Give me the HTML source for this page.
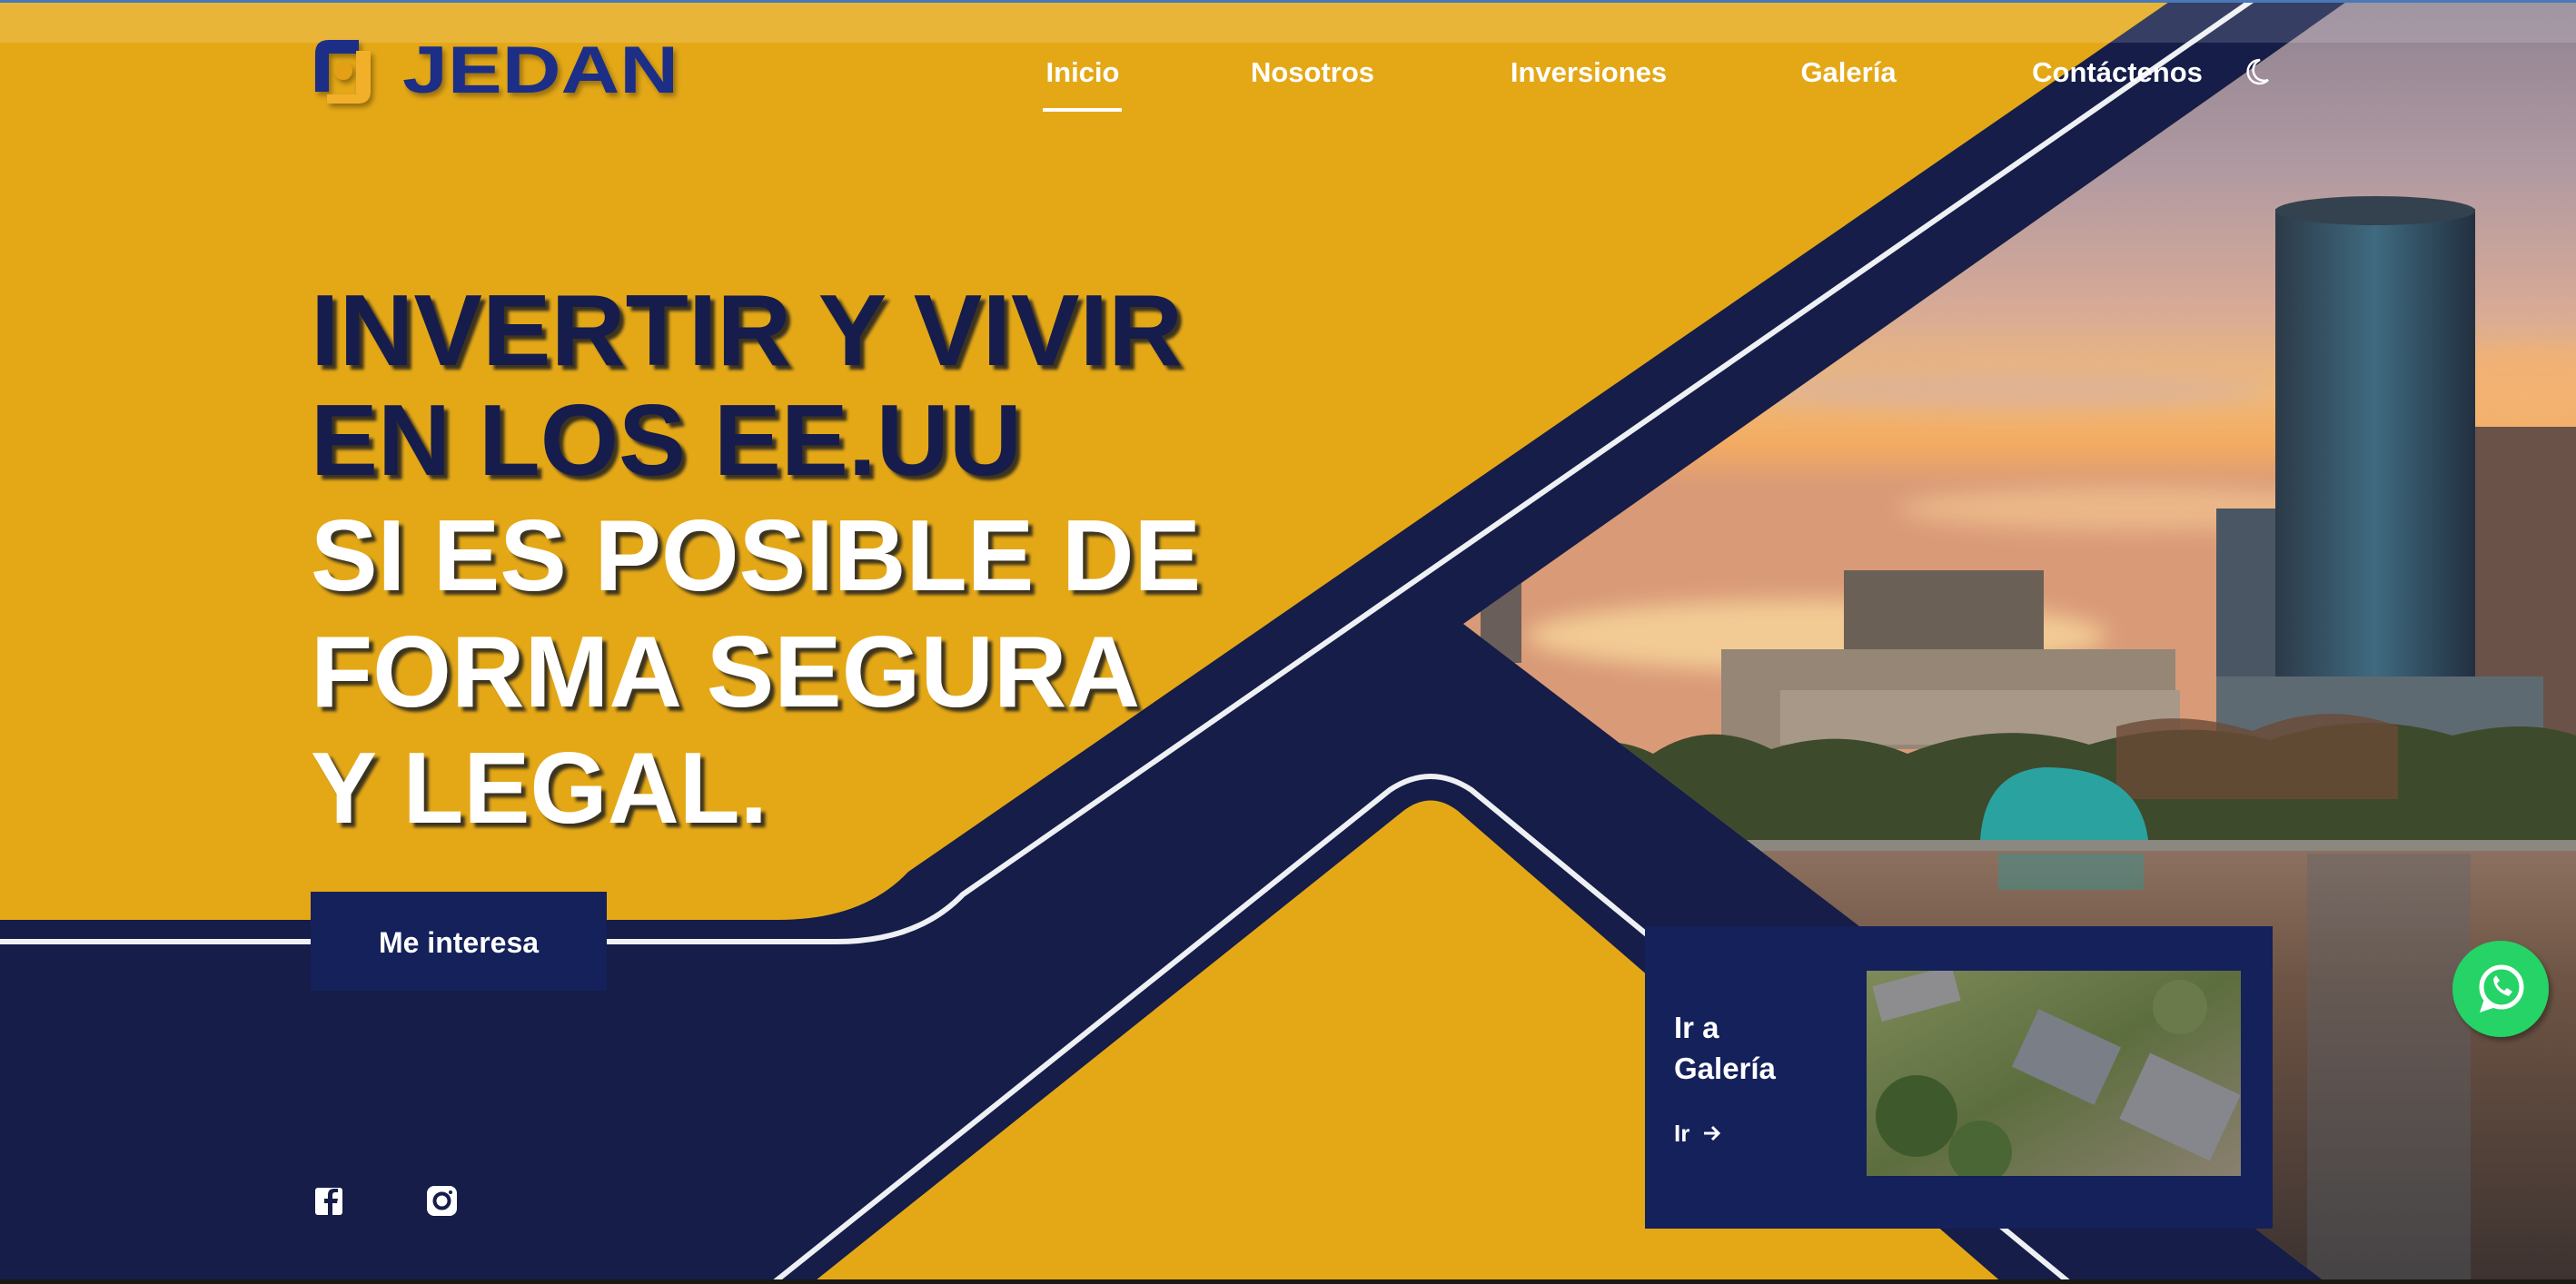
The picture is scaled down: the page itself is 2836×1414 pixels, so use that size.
<!DOCTYPE html>
<html><head><meta charset="utf-8"><style>
html,body{margin:0;padding:0;width:2836px;height:1414px;overflow:hidden;background:#e4a817}
svg{display:block}
</style></head><body>
<svg width="2836" height="1414" viewBox="0 0 2836 1414" xmlns="http://www.w3.org/2000/svg">
<defs>
<linearGradient id="sky" x1="0" y1="0" x2="0" y2="1">
<stop offset="0" stop-color="#8f8291"/>
<stop offset="0.2" stop-color="#b19aa2"/>
<stop offset="0.36" stop-color="#d7aa96"/>
<stop offset="0.46" stop-color="#f0b978"/>
<stop offset="0.52" stop-color="#f3ab62"/>
<stop offset="0.57" stop-color="#d99a78"/>
</linearGradient>
<linearGradient id="water" x1="0" y1="0" x2="0" y2="1">
<stop offset="0" stop-color="#8c7060"/>
<stop offset="0.3" stop-color="#6e5444"/>
<stop offset="1" stop-color="#3c3230"/>
</linearGradient>
<linearGradient id="tower" x1="0" y1="0" x2="1" y2="0">
<stop offset="0" stop-color="#2c3a48"/><stop offset="0.5" stop-color="#3f6a80"/><stop offset="1" stop-color="#223040"/>
</linearGradient>
<linearGradient id="house" x1="0" y1="0" x2="1" y2="1">
<stop offset="0" stop-color="#7e8a5a"/><stop offset="0.5" stop-color="#5d6e3e"/><stop offset="1" stop-color="#8a8070"/>
</linearGradient>
<clipPath id="photo"><polygon points="2586,0 2836,0 2836,1414 2563,1414 1611,687"/></clipPath>
<filter id="sh" x="-5%" y="-5%" width="110%" height="120%"><feDropShadow dx="5" dy="5" stdDeviation="1.5" flood-color="#1a1a1a" flood-opacity="0.85"/></filter>
<filter id="sh2"><feDropShadow dx="3" dy="4" stdDeviation="3" flood-color="#000" flood-opacity="0.35"/></filter>
<filter id="blur"><feGaussianBlur stdDeviation="12"/></filter>
</defs>

<rect width="2836" height="1414" fill="#e4a817"/>

<!-- photo -->
<g clip-path="url(#photo)">
<rect x="1500" y="0" width="1336" height="940" fill="url(#sky)"/>
<g filter="url(#blur)" opacity="0.7">
<ellipse cx="2000" cy="700" rx="320" ry="40" fill="#fde0a0"/>
<ellipse cx="2350" cy="560" rx="260" ry="25" fill="#f3c490"/>
<ellipse cx="2200" cy="430" rx="300" ry="20" fill="#d8b0a0"/>
<ellipse cx="2780" cy="420" rx="120" ry="40" fill="#f5b070"/>
</g>
<rect x="1630" y="640" width="45" height="90" fill="#6a5e5a"/>
<rect x="2030" y="628" width="220" height="110" fill="#6b6055"/>
<rect x="1895" y="715" width="500" height="110" fill="#958676"/>
<rect x="1960" y="760" width="440" height="60" fill="#a89888"/>
<rect x="2440" y="560" width="80" height="200" fill="#4a5664"/>
<rect x="2505" y="230" width="220" height="540" fill="url(#tower)"/>
<ellipse cx="2615" cy="232" rx="110" ry="16" fill="#34424f"/>
<rect x="2725" y="470" width="111" height="350" fill="#6a5248"/>
<rect x="2440" y="745" width="360" height="70" fill="#5e6a72"/>
<path d="M1700 840 Q1760 800 1820 830 Q1880 790 1950 825 Q2030 800 2100 830 Q2200 790 2300 820 Q2400 790 2500 815 Q2600 780 2700 810 Q2780 790 2836 810 V935 H1700 Z" fill="#3e4a2c"/>
<path d="M2330 800 Q2400 780 2480 805 Q2560 770 2640 800 L2640 880 L2330 880 Z" fill="#6a4a36" opacity="0.8"/>
<path d="M2180 925 Q2185 850 2250 845 Q2355 845 2365 925 Z" fill="#2aa3a0"/>
<rect x="1640" y="925" width="1196" height="12" fill="#8a8880"/>
<rect x="1640" y="937" width="1196" height="477" fill="url(#water)"/>
<rect x="2540" y="940" width="180" height="474" fill="#5a6470" opacity="0.35"/>
<rect x="2200" y="940" width="160" height="40" fill="#2a9a98" opacity="0.4"/>
</g>

<!-- navy main shape -->
<path d="M2391 0 L2586 0 L1611 687 L2563 1414 L0 1414 L0 1013 L857 1013 Q950 1013 1000 960 Z" fill="#151d48"/>
<path d="M2480 0 L1060 985 Q1010 1037 920 1037 L0 1037" fill="none" stroke="#eef0f4" stroke-width="6"/>
<path d="M893 1414 L1545 893 Q1575 870 1605 893 L2206 1414 Z" fill="#e4a817"/>
<path d="M850 1414 L1530 870 Q1575 840 1620 870 L2280 1414" fill="none" stroke="#eef0f4" stroke-width="6"/>
<rect x="0" y="1409" width="2836" height="5" fill="#1a1a14"/>

<!-- top strip -->
<rect x="0" y="0" width="2836" height="47" fill="#ffffff" opacity="0.15"/>
<rect x="0" y="0" width="2836" height="3" fill="#4a78b8"/>
<rect x="3" y="7" width="165" height="23" fill="none" stroke="#e8b53c" stroke-width="1"/>

<!-- logo -->
<g filter="url(#sh2)">
<path d="M395 44 H362 Q347 44 347 59 V101 H362 V59 H395 Z" fill="#1b2e86"/>
<path d="M392 56 H408 V100 Q408 114 394 114 H360 V104 H392 Z" fill="#f2b02a"/>
<circle cx="378" cy="78" r="10" fill="#e39f14"/>
<text x="443" y="102" font-family="Liberation Sans, sans-serif" font-size="73" font-weight="bold" fill="#1b2e86" textLength="304" lengthAdjust="spacingAndGlyphs">JEDAN</text>
</g>

<!-- nav -->
<g font-family="Liberation Sans, sans-serif" font-size="31" font-weight="bold" fill="#ffffff" text-anchor="middle">
<text x="1192" y="90">Inicio</text>
<text x="1445" y="90">Nosotros</text>
<text x="1749" y="90">Inversiones</text>
<text x="2035" y="90">Galería</text>
<text x="2331" y="90">Contáctenos</text>
</g>
<rect x="1148" y="119" width="87" height="4" fill="#ffffff"/>
<path d="M2488 66 A13 13 0 1 0 2497 88 A11 11 0 0 1 2488 66 Z" fill="none" stroke="#fff" stroke-width="2.5"/>

<!-- headline -->
<g font-family="Liberation Sans, sans-serif" font-weight="bold" font-size="111" filter="url(#sh)">
<text x="342" y="402" fill="#131d4c" textLength="960" lengthAdjust="spacingAndGlyphs">INVERTIR Y VIVIR</text>
<text x="342" y="523" fill="#131d4c" textLength="783" lengthAdjust="spacingAndGlyphs">EN LOS EE.UU</text>
<text x="342" y="650" fill="#ffffff" textLength="980" lengthAdjust="spacingAndGlyphs">SI ES POSIBLE DE</text>
<text x="342" y="778" fill="#ffffff" textLength="913" lengthAdjust="spacingAndGlyphs">FORMA SEGURA</text>
<text x="342" y="906" fill="#ffffff" textLength="503" lengthAdjust="spacingAndGlyphs">Y LEGAL.</text>
</g>

<!-- button -->
<rect x="342" y="982" width="326" height="109" fill="#14215a"/>
<text x="505" y="1049" font-family="Liberation Sans, sans-serif" font-size="32" font-weight="bold" fill="#fff" text-anchor="middle">Me interesa</text>

<!-- socials -->
<rect x="347" y="1308" width="30" height="30" rx="3" fill="#fff"/>
<path d="M366 1338 V1325 H371 L372 1320 H366 V1316 Q366 1313 369 1313 H372 V1309 H368 Q361 1309 361 1316 V1320 H357 V1325 H361 V1338 Z" fill="#151d48"/>
<rect x="470" y="1306" width="33" height="33" rx="8" fill="#fff"/>
<circle cx="486.5" cy="1322.5" r="8" fill="none" stroke="#151d48" stroke-width="4"/>
<circle cx="496" cy="1313" r="2" fill="#151d48"/>

<!-- gallery card -->
<rect x="1811" y="1020" width="691" height="333" fill="#14215a"/>
<g font-family="Liberation Sans, sans-serif" font-weight="bold" fill="#fff">
<text x="1843" y="1143" font-size="33">Ir a</text>
<text x="1843" y="1188" font-size="33">Galería</text>
<text x="1843" y="1257" font-size="26">Ir</text>
</g>
<path d="M1876 1248 H1892 M1885 1241 L1892 1248 L1885 1255" fill="none" stroke="#fff" stroke-width="3"/>
<svg x="2055" y="1069" width="412" height="226" viewBox="0 0 412 226">
<rect width="412" height="226" fill="url(#house)"/>
<rect x="10" y="5" width="90" height="40" fill="#8d8d90" transform="rotate(-15 55 25)"/>
<rect x="170" y="60" width="100" height="70" fill="#7a7e86" transform="rotate(25 220 95)"/>
<rect x="290" y="110" width="110" height="80" fill="#85878c" transform="rotate(25 345 150)"/>
<circle cx="55" cy="160" r="45" fill="#3e5a2c"/>
<circle cx="125" cy="200" r="35" fill="#4a6634"/>
<circle cx="345" cy="40" r="30" fill="#6a7a4a"/>
</svg>

<!-- whatsapp -->
<circle cx="2753" cy="1089" r="53" fill="#25d366" filter="url(#sh2)"/>
<circle cx="2754" cy="1087" r="22" fill="none" stroke="#fff" stroke-width="5"/>
<path d="M2735 1100 L2730 1115 L2745 1110 Z" fill="#fff"/>
<path d="M2745 1078 Q2746 1092 2762 1097 L2766 1092 L2760 1088 L2757 1091 Q2751 1088 2749 1083 L2752 1080 L2748 1074 Z" fill="#fff"/>
</svg>
</body></html>
